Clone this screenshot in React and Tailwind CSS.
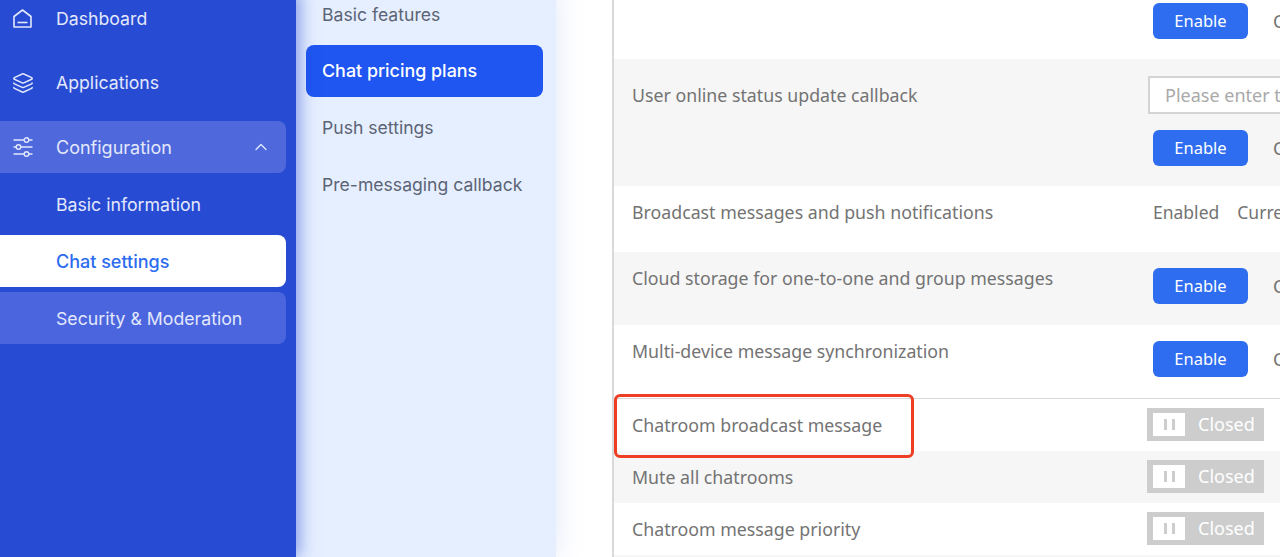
import { ChevronUp, Layers } from 'lucide-react';

const inter = { fontFamily: 'Inter, sans-serif' };

function HomeIcon() {
  return (
    <svg width="19" height="19" viewBox="0 0 19 19" fill="none" stroke="currentColor" strokeWidth="1.6" strokeLinejoin="round">
      <path d="M1 7.5 L9.5 1 L18 7.5 V18 H1 Z" />
      <path d="M4.5 13.5 H14.5" />
    </svg>
  );
}

function SlidersIcon() {
  return (
    <svg width="20" height="20" viewBox="0 0 20 20" fill="none" stroke="currentColor" strokeWidth="1.4">
      <path d="M0.5 3 H11 M16 3 H19.5" />
      <circle cx="13.5" cy="3" r="2.3" />
      <path d="M0.5 10 H3 M8 10 H19.5" />
      <circle cx="5.5" cy="10" r="2.3" />
      <path d="M0.5 17 H11 M16 17 H19.5" />
      <circle cx="13.5" cy="17" r="2.3" />
    </svg>
  );
}

function EnableButton() {
  return (
    <button className="shrink-0 w-[95px] h-[36px] rounded-md bg-[#2e6df0] text-white text-[16.5px]">Enable</button>
  );
}

function EnableCell({ top }) {
  return (
    <div className={`flex items-center gap-[25px] ${top} whitespace-nowrap text-[18px] text-[#737373]`}>
      <EnableButton />
      <span>Closed</span>
    </div>
  );
}

function ClosedSwitch() {
  return (
    <div className="w-[117px] h-[33px] bg-[#cdcdcd] flex items-center pl-[6px] gap-[13px] text-white text-[18px]">
      <span className="w-[32px] h-[23px] bg-white flex items-center justify-center gap-[5px]">
        <i className="w-[3px] h-[11px] bg-[#cdcdcd]" />
        <i className="w-[3px] h-[11px] bg-[#cdcdcd]" />
      </span>
      Closed
    </div>
  );
}

function Row({ label, grey, height, children, labelTop = 'pt-[14px]', divider }) {
  return (
    <div className={`flex shrink-0 ${height} ${grey ? 'bg-[#f6f6f6]' : 'bg-white'} ${divider ? 'border-t border-[#d9d9d9]' : ''}`}>
      <div className={`w-[539px] shrink-0 pl-[18px] ${labelTop} text-[17.75px] leading-[24px] text-[#737373]`}>{label}</div>
      <div className="flex-1 min-w-0">{children}</div>
    </div>
  );
}

export default function App() {
  return (
    <div className="relative flex w-[1280px] h-[557px] overflow-hidden bg-white">
      {/* main sidebar */}
      <aside style={inter} className="relative z-20 w-[296px] shrink-0 bg-[#274bd3] shadow-[3px_0_16px_rgba(39,75,211,0.55)] text-[17.7px] text-[#e3e8fb] -mt-[8px]">
        <div className="flex items-center h-[52px] pl-[13px] gap-[24px]">
          <HomeIcon />
          <span className="pt-[2px]">Dashboard</span>
        </div>
        <div className="flex items-center h-[52px] mt-[13px] pl-[12px] gap-[22px]">
          <Layers size={22} strokeWidth={1.6} />
          Applications
        </div>
        <div className="flex items-center h-[52px] mt-[12px] -ml-2 w-[294px] pl-[21px] pr-[15px] gap-[23px] rounded-lg bg-[#4f69dc] text-[18px]">
          <SlidersIcon />
          <span className="flex-1">Configuration</span>
          <ChevronUp size={20} strokeWidth={1.6} />
        </div>
        <div className="flex items-center h-[52px] pt-[2px] mt-[5px] pl-[56px]">Basic information</div>
        <div className="flex items-center h-[52px] mt-[5px] -ml-2 w-[294px] pl-[64px] rounded-lg bg-white text-[#2b6cf0] text-[18px] font-medium">Chat settings</div>
        <div className="flex items-center h-[52px] pt-[2px] mt-[5px] -ml-2 w-[294px] pl-[64px] rounded-lg bg-[#4b65df]">Security &amp; Moderation</div>
      </aside>

      {/* secondary nav */}
      <nav style={inter} className="relative z-10 w-[260px] shrink-0 bg-[#e6efff] shadow-[0_0_26px_rgba(190,205,240,0.45)] pl-[10px] pr-[13px] -mt-[12px] text-[17.6px] text-[#5b6475]">
        <div className="flex items-center h-[52px] pt-[2px] px-[16px]">Basic features</div>
        <div className="flex items-center h-[52px] mt-[5px] px-[16px] rounded-lg bg-[#1f55f0] text-white text-[17.9px] font-medium">Chat pricing plans</div>
        <div className="flex items-center h-[52px] mt-[5px] px-[16px]">Push settings</div>
        <div className="flex items-center h-[52px] mt-[5px] px-[16px]">Pre-messaging callback</div>
      </nav>

      <div className="w-[56px] shrink-0 bg-white" />

      {/* settings table */}
      <main style={{ fontFamily: '"Noto Sans", sans-serif' }} className="relative flex-1 min-w-0 flex flex-col overflow-hidden border-l-2 border-[#d9d9d9]">
        <Row height="h-[59px]">
          <EnableCell top="pt-[3px]" />
        </Row>
        <Row grey height="h-[127px]" label="User online status update callback" labelTop="pt-[24px]">
          <div className="-ml-[5px] pt-[17px]">
            <input readOnly placeholder="Please enter the callback URL" className="w-[200px] h-[38px] border-2 border-[#d4d4d4] bg-white px-[15px] text-[18px] placeholder:text-[#a9a9a9]" />
            <div className="mt-[16px] ml-[5px]">
              <EnableCell top="pt-0" />
            </div>
          </div>
        </Row>
        <Row height="h-[66px]" label="Broadcast messages and push notifications">
          <div className="flex gap-[18px] pt-[14px] whitespace-nowrap text-[17.5px] leading-[24px] text-[#737373]">
            <span>Enabled</span>
            <span>Current</span>
          </div>
        </Row>
        <Row grey height="h-[73px]" label="Cloud storage for one-to-one and group messages">
          <EnableCell top="pt-[16px]" />
        </Row>
        <Row height="h-[73px]" label="Multi-device message synchronization">
          <EnableCell top="pt-[16px]" />
        </Row>
        <Row divider height="h-[53px]" label="Chatroom broadcast message">
          <div className="-ml-[6px] pt-[9px]"><ClosedSwitch /></div>
        </Row>
        <Row grey height="h-[52px]" label="Mute all chatrooms">
          <div className="-ml-[6px] pt-[9px]"><ClosedSwitch /></div>
        </Row>
        <Row height="h-[52px]" label="Chatroom message priority">
          <div className="-ml-[6px] pt-[9px]"><ClosedSwitch /></div>
        </Row>
        <Row grey height="h-[52px]" />

        {/* highlight drawn over the row */}
        <div className="absolute left-0 top-[394px] w-[300px] h-[64px] border-[3px] border-[#ee3f24] rounded-md" />
      </main>
    </div>
  );
}
